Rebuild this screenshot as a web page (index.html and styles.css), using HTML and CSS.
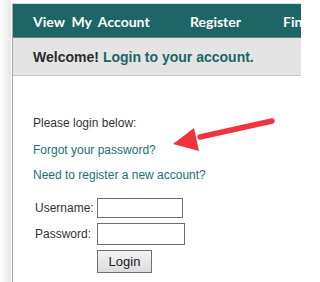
FILE: index.html
```html
<!DOCTYPE html>
<html>
<head>
<meta charset="utf-8">
<link rel="stylesheet" href="styles.css">
</head>
<body>
<div class="page">
  <div class="nav">
    <a class="nav-item nav-first">View&nbsp; My&nbsp; Account</a>
    <a class="nav-item">Register</a>
    <a class="nav-item">Find</a>
  </div>
  <div class="welcome"><span class="hi">Welcome!</span> <span class="lead">Login to your account.</span></div>
  <div class="content">
    <p class="line plain first">Please login below:</p>
    <p class="line"><a class="link">Forgot your password?</a></p>
    <p class="line"><a class="link">Need to register a new account?</a></p>
    <form class="form">
      <label class="lbl">Username:</label><input class="inp inp-user" type="text">
      <label class="lbl">Password:</label><input class="inp inp-pass" type="password">
      <span></span><button class="btn" type="button">Login</button>
    </form>
    <svg class="arrow" width="110" height="40" viewBox="0 0 110 40">
      <line x1="100" y1="3" x2="28" y2="19" stroke="#ef3340" stroke-width="5.5" stroke-linecap="round"/>
      <polygon points="1,26 22,10 27,33" fill="#ef3340"/>
    </svg>
  </div>
</div>
</body>
</html>
```
FILE: styles.css
```css
html, body {
  margin: 0;
  padding: 0;
  background: #ffffff;
  overflow: hidden;
}
body {
  width: 301px;
  height: 282px;
  background: linear-gradient(to right, #ffffff 0px, #f4f4f4 6px, #e6e6e6 11px, #ffffff 11px);
}
.page {
  margin: 3px 0 0 12px;
  width: 288px;
  height: 279px;
  overflow: hidden;
  background: #ffffff;
  border-left: 1px solid #a8a8a8;
  border-top: 1px solid #dcdcdc;
  font-family: "Liberation Sans", Arial, sans-serif;
  position: relative;
}
.nav {
  height: 33px;
  background: #1e6565;
  border-bottom: 1px solid #7a7a7a;
  display: flex;
  align-items: center;
  padding-left: 20px;
}
.nav-item {
  color: #ffffff;
  font-family: "Lato", "Open Sans", sans-serif;
  font-weight: 700;
  font-size: 14px;
  white-space: nowrap;
  flex: none;
  padding-top: 1px;
}
.nav-first { width: 157px; }
.nav-item + .nav-item { width: 93px; }
.welcome {
  height: 37px;
  background: #e4e4e4;
  border-bottom: 1px solid #c8c8c8;
  display: flex;
  align-items: center;
  padding-left: 20px;
  font-weight: 700;
  font-size: 14px;
}
.hi { color: #2b2b2b; white-space: pre; }
.lead { color: #1e6565; margin-left: 4px; }
.content {
  padding: 41px 0 0 20px;
  position: relative;
  font-size: 12px;
}
.line {
  margin: 0 0 13px 0;
  line-height: 12px;
}
.first { margin-bottom: 15px; }
.plain { color: #333333; }
.link { color: #1e6e72; }
.form {
  display: grid;
  grid-template-columns: 62px auto;
  row-gap: 5px;
  justify-content: start;
  align-items: center;
  margin-top: 17px;
  margin-left: 2px;
}
.lbl { color: #333333; font-size: 12px; }
.inp {
  box-sizing: border-box;
  height: 20px;
  border: 1px solid #6e6e6e;
  padding: 0;
  margin: 0;
  background: #fff;
}
.inp-user { width: 86px; }
.inp-pass { width: 88px; height: 22px; }
.btn {
  box-sizing: border-box;
  width: 55px;
  height: 23px;
  border: 1px solid #707070;
  background: linear-gradient(#f3f3f3, #dcdcdc);
  font-family: "Liberation Sans", Arial, sans-serif;
  font-size: 13px;
  color: #222;
  padding: 0;
  margin: 0;
  border-radius: 0;
}
.arrow {
  position: absolute;
  left: 159px;
  top: 42px;
}
```
